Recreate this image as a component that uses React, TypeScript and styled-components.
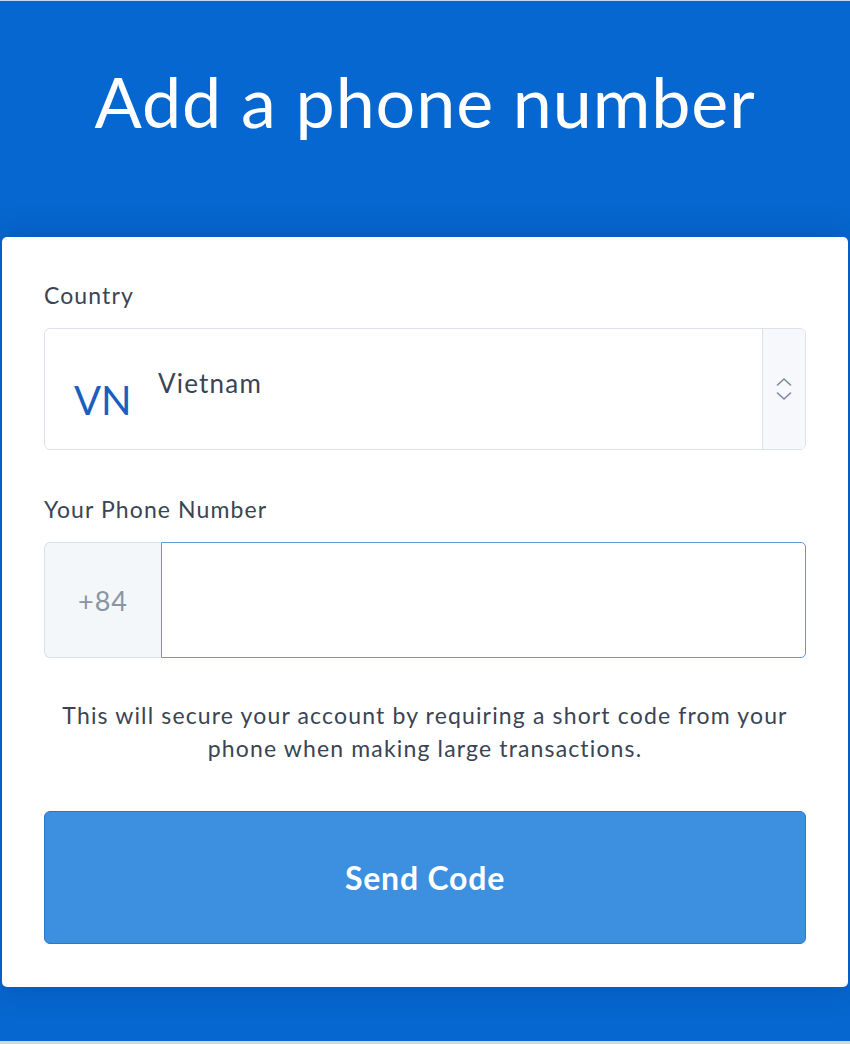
import styled, { createGlobalStyle } from "styled-components";

const colors = {
  blue: "#0667d0",
  text: "#3a4454",
  muted: "#8a95a3",
  border: "#dde2e8",
  fieldBg: "#f4f7fa",
  focus: "#5f9ad8",
  button: "#3d8fdf",
  buttonBorder: "#2d77c6",
  brand: "#1a5fbf",
  white: "#ffffff",
};

const GlobalStyle = createGlobalStyle`
  html, body {
    margin: 0;
    padding: 0;
    background: ${colors.blue};
  }
  body {
    font-family: Lato, "Open Sans", Arial, sans-serif;
    -webkit-font-smoothing: antialiased;
  }
  * { box-sizing: border-box; }
`;

const App = () => {
  return (
    <Page>
      <GlobalStyle />
      <Header>
        <Title>{"Add a phone number"}</Title>
      </Header>

      <Card>
        <Label>{"Country"}</Label>
        <Select>
          <SelectValue>
            <CountryCode>{"VN"}</CountryCode>
            <CountryName>{"Vietnam"}</CountryName>
          </SelectValue>
          <SelectArrows>
            <svg width="16" height="24" viewBox="0 0 16 24" fill="none">
              <path d="M1.5 8 L8 2 L14.5 8" stroke="#7b8a9f" strokeWidth="1.6" strokeLinecap="round" strokeLinejoin="round" />
              <path d="M1.5 16 L8 22 L14.5 16" stroke="#7b8a9f" strokeWidth="1.6" strokeLinecap="round" strokeLinejoin="round" />
            </svg>
          </SelectArrows>
        </Select>

        <Label>{"Your Phone Number"}</Label>
        <PhoneGroup>
          <Prefix>{"+84"}</Prefix>
          <PhoneInput type="tel" />
        </PhoneGroup>

        <Hint>
          {"This will secure your account by requiring a short code from your"}
          <br />
          {"phone when making large transactions."}
        </Hint>

        <SendBtn>{"Send Code"}</SendBtn>
      </Card>
      <Bottom />
    </Page>
  );
};

export default App;

const Page = styled.div`
  width: 850px;
  height: 1044px;
  display: flex;
  flex-direction: column;
  border-top: 1px solid #c7d8ee;
  background: ${colors.blue};
  overflow: hidden;
`;

const Header = styled.div`
  height: 236px;
  padding-top: 58px;
  text-align: center;
`;

const Title = styled.h1`
  margin: 0;
  font-size: 70px;
  line-height: 84px;
  font-weight: 400;
  letter-spacing: 0.9px;
  color: ${colors.white};
`;

const Card = styled.div`
  margin: 0 2px;
  padding: 45px 42px 43px;
  background: ${colors.white};
  border-radius: 5px;
  box-shadow: 0 0 30px rgba(0, 30, 90, 0.25);
`;

const Label = styled.div`
  font-size: 23px;
  line-height: 26px;
  letter-spacing: 1.1px;
  color: ${colors.text};
  margin-bottom: 20px;
`;

const Select = styled.div`
  display: flex;
  height: 122px;
  border: 1px solid ${colors.border};
  border-radius: 6px;
  margin-bottom: 46px;
  overflow: hidden;
`;

const SelectValue = styled.div`
  flex: 1;
  display: flex;
  align-items: flex-start;
  padding: 39px 0 0 29px;
`;

const CountryCode = styled.span`
  font-size: 40px;
  line-height: 48px;
  margin-top: 8px;
  color: ${colors.brand};
  width: 84px;
`;

const CountryName = styled.span`
  font-size: 26px;
  line-height: 30px;
  letter-spacing: 1.2px;
  color: ${colors.text};
`;

const SelectArrows = styled.div`
  width: 43px;
  display: flex;
  align-items: center;
  justify-content: center;
  background: #f6f8fb;
  border-left: 1px solid ${colors.border};
`;

const PhoneGroup = styled.div`
  display: flex;
  height: 116px;
  margin-bottom: 41px;
`;

const Prefix = styled.div`
  width: 117px;
  display: flex;
  align-items: center;
  justify-content: center;
  background: ${colors.fieldBg};
  border: 1px solid ${colors.border};
  border-right: none;
  border-radius: 6px 0 0 6px;
  font-size: 27px;
  letter-spacing: 1px;
  color: ${colors.muted};
`;

const PhoneInput = styled.input`
  flex: 1;
  border: 1px solid ${colors.focus};
  border-radius: 0 5px 5px 0;
  outline: none;
  font-size: 25px;
  padding: 0 20px;
  background: ${colors.white};
`;

const Hint = styled.p`
  margin: 0 0 46px;
  text-align: center;
  font-size: 23px;
  line-height: 33px;
  letter-spacing: 1.15px;
  color: ${colors.text};
`;

const SendBtn = styled.button`
  display: block;
  width: 100%;
  height: 133px;
  background: ${colors.button};
  border: 1px solid ${colors.buttonBorder};
  border-radius: 6px;
  color: ${colors.white};
  font-family: inherit;
  font-size: 32px;
  font-weight: 700;
  letter-spacing: 0.8px;
  cursor: pointer;
`;

const Bottom = styled.div`
  flex: 1;
  border-bottom: 3px solid #d3d8de;
`;
